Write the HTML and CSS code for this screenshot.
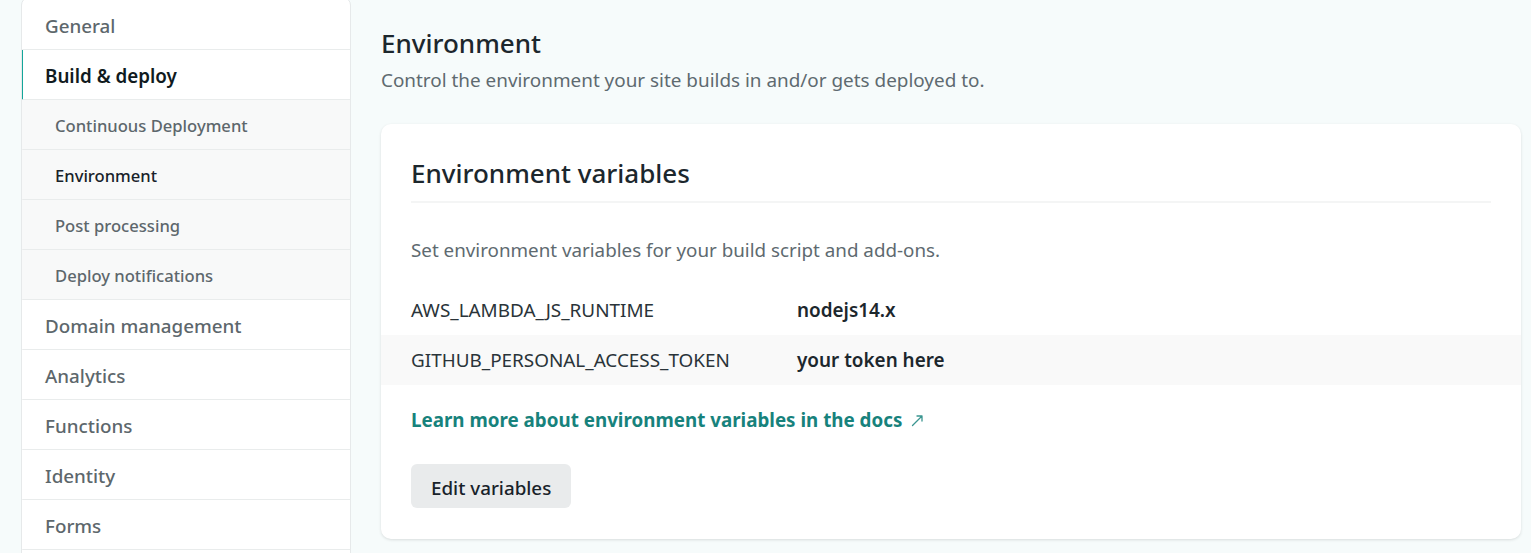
FILE: index.html
```html
<!DOCTYPE html>
<html>
<head>
<meta charset="utf-8">
<link rel="stylesheet" href="styles.css">
</head>
<body>
<div class="page">
  <nav class="sidebar">
    <a class="item">General</a>
    <a class="item active">Build &amp; deploy</a>
    <a class="item sub">Continuous Deployment</a>
    <a class="item sub current">Environment</a>
    <a class="item sub">Post processing</a>
    <a class="item sub">Deploy notifications</a>
    <a class="item">Domain management</a>
    <a class="item">Analytics</a>
    <a class="item">Functions</a>
    <a class="item">Identity</a>
    <a class="item">Forms</a>
    <div class="item filler"></div>
  </nav>
  <main class="content">
    <header class="section-head">
      <h1>Environment</h1>
      <p>Control the environment your site builds in and/or gets deployed to.</p>
    </header>
    <section class="card">
      <h2>Environment variables</h2>
      <p class="desc">Set environment variables for your build script and add-ons.</p>
      <div class="vars">
        <div class="var-row"><span class="key">AWS_LAMBDA_JS_RUNTIME</span><span class="val">nodejs14.x</span></div>
        <div class="var-row alt"><span class="key">GITHUB_PERSONAL_ACCESS_TOKEN</span><span class="val">your token here</span></div>
      </div>
      <a class="docs">Learn more about environment variables in the docs<svg class="arrow" width="13" height="13" viewBox="0 0 13 13"><path d="M1.5 11.5 L11 2 M6 2 H11 V7" fill="none" stroke="#3a9590" stroke-width="1.3" stroke-linecap="round" stroke-linejoin="round"/></svg></a>
      <button class="btn">Edit variables</button>
    </section>
  </main>
</div>
</body>
</html>
```
FILE: styles.css
```css
* { box-sizing: border-box; }
html, body { margin: 0; padding: 0; }
body {
  background: #f6fbfb;
  font-family: "Noto Sans", "Open Sans", sans-serif;
  color: #1f2a30;
  overflow: hidden;
  height: 553px;
}
.page {
  display: flex;
  align-items: flex-start;
  padding-left: 21px;
  gap: 30px;
}
.sidebar {
  width: 330px;
  flex: none;
  background: #fff;
  border: 1px solid #e6e9ea;
  border-radius: 8px;
  margin-top: -3px;
  display: flex;
  flex-direction: column;
  overflow: hidden;
}
.item {
  height: 50px;
  display: flex;
  align-items: center;
  padding-left: 22px;
  padding-top: 2px;
  border-bottom: 1px solid #e9ecec;
  font-size: 18.8px;
  font-weight: 500;
  color: #5d676c;
  border-left: 2px solid transparent;
  margin-left: -1px;
}
.item:first-child { height: 52px; padding-top: 4px; }
.item.active {
  border-left-color: #14a69a;
  color: #101a20;
  font-weight: 600;
}
.item.sub {
  background: #f8f9f9;
  padding-left: 32px;
  font-size: 16.6px;
}
.item.sub.current { color: #18222a; }
.item.filler { border-bottom: none; }
.content {
  flex: 1;
  padding-top: 26px;
  padding-right: 10px;
}
.section-head h1 {
  margin: 0;
  font-size: 26px;
  font-weight: 500;
  line-height: 34px;
  color: #1c272d;
}
.section-head p {
  margin: 7px 0 0;
  font-size: 18.9px;
  line-height: 26px;
  color: #5e6a70;
}
.card {
  margin-top: 31px;
  background: #fff;
  border-radius: 10px;
  box-shadow: 0 1px 3px rgba(0,0,0,0.12);
  padding: 30px 30px 30px;
  height: 415px;
}
.card h2 {
  margin: 0;
  font-size: 26px;
  font-weight: 500;
  line-height: 38px;
  padding-bottom: 9px;
  border-bottom: 2px solid #f4f5f5;
  color: #1c272d;
}
.desc {
  margin: 33px 0 0;
  font-size: 18.8px;
  line-height: 28px;
  color: #5e6a70;
}
.vars { margin: 21px -30px 0; }
.var-row {
  display: flex;
  align-items: center;
  height: 50px;
  padding-left: 30px;
  font-size: 18.9px;
}
.var-row.alt { background: #f9f9f9; }
.key { width: 386px; color: #2a3439; }
.val { font-weight: 600; color: #1c272d; }
.docs {
  display: flex;
  align-items: center;
  margin-top: 23px;
  font-size: 18.8px;
  font-weight: 700;
  color: #17827c;
  line-height: 24px;
}
.arrow { margin-left: 9px; margin-top: 1px; }
.btn {
  display: block;
  margin-top: 32px;
  height: 44px;
  padding: 3px 20px 0;
  border: none;
  border-radius: 6px;
  background: #e9ebec;
  font-family: inherit;
  font-size: 18.8px;
  font-weight: 500;
  color: #18222a;
}
```
